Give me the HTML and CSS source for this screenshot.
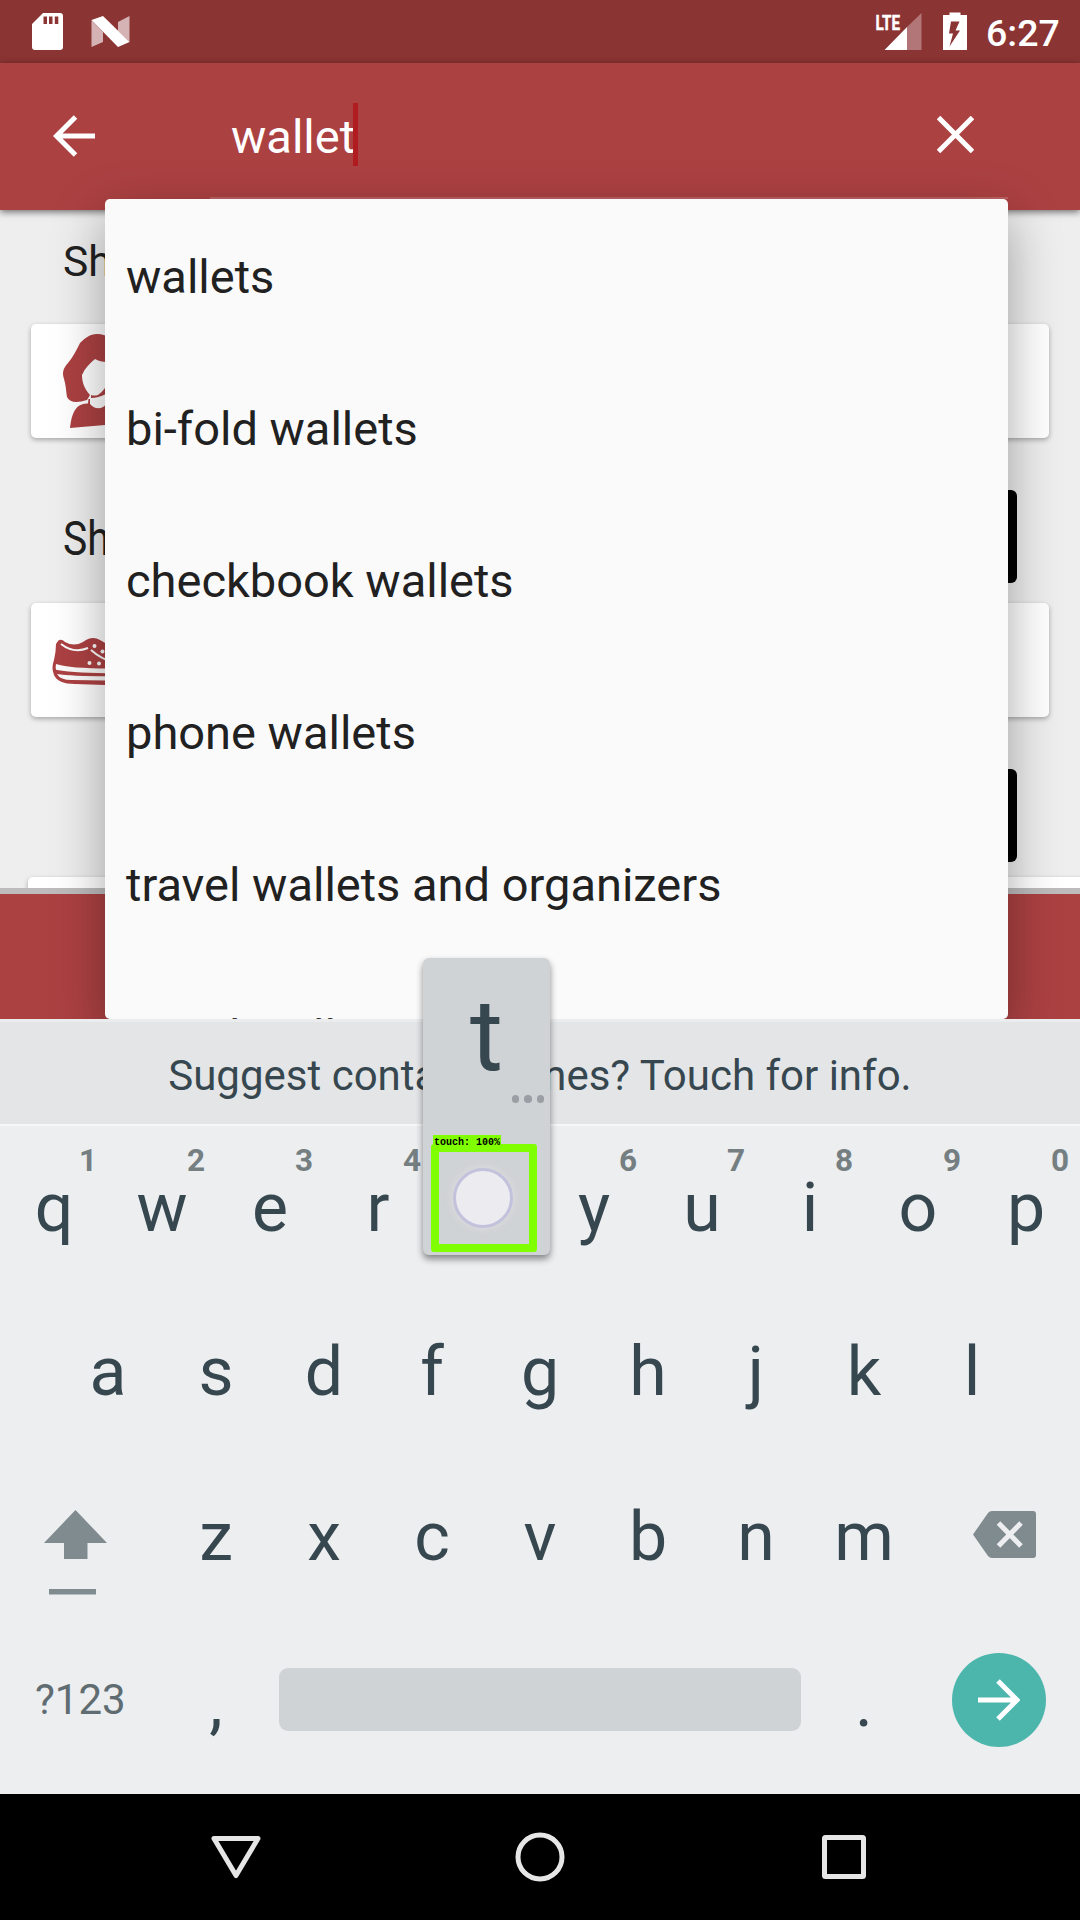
FILE: index.html
```html
<!DOCTYPE html>
<html lang="en">
<head>
<meta charset="utf-8">
<title>Search</title>
<link rel="stylesheet" href="styles.css">
</head>
<body>
<div class="screen">
  <div class="app">
    <header class="status">
      <svg class="status-left" viewBox="0 0 140 63" width="140" height="63">
        <path fill="#fff" fill-rule="evenodd" d="M43 13H60Q63 13 63 16V47Q63 50 60 50H35Q32 50 32 47V24ZM43.500 16.500V24H47V16.500ZM49 16.500V24H52.500V16.500ZM54.800 16.500V24H58.300V16.500Z"/>
        <path fill="#d5b3b4" d="M91.500 20 103 32V42L91.500 47ZM118 22 129.500 16V42L118 31Z"/>
        <path fill="#fff" d="M91.500 20 103 16 129.500 42 118 47Z"/>
      </svg>
      <svg class="status-right" viewBox="860 0 110 63" width="110" height="63">
        <text class="lte" x="875.500" y="29.500" textLength="24.500" lengthAdjust="spacingAndGlyphs">LTE</text>
        <path fill="#b27678" d="M907 27 921.500 13V50H907Z"/>
        <path fill="#fff" d="M907 27V50H884.500Z"/>
        <path fill="#fff" fill-rule="evenodd" d="M949.500 12.500H960.500V15H967V50H943V15H949.500ZM951 21.500 949 33.500H953L949.500 46.500 960 30.500H955.500L959.500 21.500Z"/>
      </svg>
      <span class="clock">6:27</span>
    </header>
    <div class="toolbar">
      <svg class="back" viewBox="0 0 42 42" width="42" height="42"><path d="M42 21H4M22.500 2 3.500 21 22.500 40" fill="none" stroke="#fff" stroke-width="5"/></svg>
      <div class="field">
        <span class="query">wallet</span><i class="caret"></i>
        <svg class="clear" viewBox="0 0 37 37" width="37" height="37"><path d="M1.500 1.500 35.500 35.500M35.500 1.500 1.500 35.500" stroke="#fff" stroke-width="5"/></svg>
      </div>
    </div>
    <main class="content">
      <h2 class="heading">Sh</h2>
      <section class="card">
        <svg viewBox="31 324 120 114" width="120" height="114">
          <path fill="#ac4142" d="M97 334C90 334 85 338 80 343C76 351 73 357 68 363C63 369 62 372 64 379C66 386 66 390 67 397C70 403 77 403 87 400L90 395C84 388 82 382 82 375C85 368 90 363 95 359Q100 362 107 362C111 374 109 388 98 395Q94 396 91 395V398Q98 398 106 394L125 398C132 390 128 370 120 355C115 340 108 334 97 334Z"/>
          <path fill="#ac4142" d="M88 403.500Q79 403 75 410C71 417 71 422 70 428L128 423Q126 406 108 402C103 410 95 410 90 404V399H88.500Z"/>
        </svg>
      </section>
      <button class="more" aria-label="More"></button>
      <h2 class="heading narrow"><span>Sh</span></h2>
      <section class="card">
        <svg viewBox="31 602 120 115" width="120" height="115">
          <path fill="#ac4142" d="M58 640Q61 637 65 641Q74 646 83 641Q92 634 100 639L137 660Q142 675 137 684L105 684L75 683Q58 683 54 674Q51 667 54 659Q56 650 56 643Z"/>
          <g fill="none" stroke="#fbfbfb" stroke-width="2"><path d="M61 643Q74 653 88 647M91 649Q101 658 113 661"/></g>
          <path fill="#fbfbfb" d="M56 663Q55 669 57 669Q82 673 137 672V667Q75 669 56 663ZM57 673Q60 679 72 679L137 680V675Q75 676 57 673Z"/>
          <g fill="#fbfbfb"><circle cx="94.500" cy="645" r="2"/><circle cx="102.500" cy="650.500" r="2"/><circle cx="89.500" cy="662" r="2"/><circle cx="99" cy="662.500" r="2"/></g>
        </svg>
      </section>
      <button class="more" aria-label="More"></button>
      <section class="card peek"></section>
    </main>
    <footer class="bottom-bar"></footer>
    <ul class="suggestions">
      <li>wallets</li>
      <li>bi-fold wallets</li>
      <li>checkbook wallets</li>
      <li>phone wallets</li>
      <li>travel wallets and organizers</li>
      <li>travel wallet</li>
    </ul>
  </div>

  <div class="keyboard">
    <div class="strip">Suggest contact names? Touch for info.</div>
    <div class="row first">
      <span class="key">q<sup>1</sup></span><span class="key">w<sup>2</sup></span><span class="key">e<sup>3</sup></span><span class="key">r<sup>4</sup></span><span class="key"></span><span class="key">y<sup>6</sup></span><span class="key">u<sup>7</sup></span><span class="key">i<sup>8</sup></span><span class="key">o<sup>9</sup></span><span class="key">p<sup>0</sup></span>
    </div>
    <div class="row">
      <span class="key">a</span><span class="key">s</span><span class="key">d</span><span class="key">f</span><span class="key">g</span><span class="key">h</span><span class="key">j</span><span class="key">k</span><span class="key">l</span>
    </div>
    <div class="row">
      <svg class="side" viewBox="0 1456 162 165" width="162" height="165"><path fill="#808b8f" d="M75.500 1510 107 1543H87.500V1559H64V1543H44ZM49 1589H96V1594.500H49Z"/></svg>
      <span class="key">z</span><span class="key">x</span><span class="key">c</span><span class="key">v</span><span class="key">b</span><span class="key">n</span><span class="key">m</span>
      <svg class="side" viewBox="918 1456 162 165" width="162" height="165"><path fill="#808b8f" d="M973 1534.500 988 1513Q989.500 1511 992 1511H1033Q1036 1511 1036 1514V1555Q1036 1558 1033 1558H992Q989.500 1558 988 1556Z"/><path d="M998.500 1523 1021 1546M1021 1523 998.500 1546" stroke="#eceef0" stroke-width="5"/></svg>
    </div>
    <div class="row last">
      <span class="symbols">?123</span>
      <span class="key">,</span>
      <span class="space"></span>
      <span class="key">.</span>
      <span class="enter"><svg viewBox="0 0 42 42" width="42" height="42"><path d="M0 21H38M20 2 39 21 20 40" fill="none" stroke="#fff" stroke-width="5"/></svg></span>
    </div>
  </div>

  <nav class="nav">
    <svg viewBox="0 0 54 54" width="54" height="54"><path d="M5 8.500H49L27 45.500Z"/></svg>
    <svg viewBox="0 0 54 54" width="54" height="54"><circle cx="27" cy="27" r="22"/></svg>
    <svg viewBox="0 0 54 54" width="54" height="54"><rect x="7.500" y="7.500" width="39" height="39" rx="1"/></svg>
  </nav>

  <div class="popup">
    <span class="popup-letter">t</span>
    <span class="dots"><i></i><i></i><i></i></span>
    <div class="touch"><span class="touch-label">touch: 100%</span><i class="finger"></i></div>
  </div>
</div>
</body>
</html>
```
FILE: styles.css
```css
* { box-sizing: border-box; }
body { margin: 0; font-family: Roboto, "Liberation Sans", sans-serif; }
.screen { position: relative; width: 1080px; height: 1920px; display: flex; flex-direction: column; overflow: hidden; }

.app { position: relative; height: 1019px; flex: none; background: #eee; display: flex; flex-direction: column; overflow: hidden; }
.status { height: 63px; flex: none; background: #8a3433; display: flex; align-items: center; color: #fff; }
.status svg { display: block; }
.status-right { margin-left: 720px; }
.lte { font: bold 21px Roboto, sans-serif; fill: #fff; stroke: #fff; stroke-width: .5px; }
.clock { margin-left: 16px; font-size: 37.500px; font-weight: 500; line-height: 63px; padding-top: 3px; }

.toolbar { height: 147px; flex: none; background: #ac4142; display: flex; align-items: center; padding: 0 72px 0 53px; box-shadow: 0 2px 7px rgba(0, 0, 0, .55); z-index: 1; }
.back { margin-top: -1px; }
.field { flex: 1; height: 136px; align-self: flex-start; margin-left: 115px; padding: 0 34.500px 0 21px; display: flex; align-items: center; border-bottom: 2px solid #bb6162; }
.query { font-size: 47px; color: #fff; line-height: 56px; padding-top: 13px; }
.caret { width: 5px; height: 63px; background: #b01c1f; margin: 8px 0 0 -2px; }
.clear { margin-left: auto; margin-top: 9px; }

.content { height: 684px; flex: none; display: flex; flex-direction: column; padding: 30px 31px 0; border-bottom: 6px solid #bdbbbb; overflow: hidden; }
.heading { margin: 0; height: 84px; flex: none; padding-left: 32px; font-size: 42.500px; font-weight: 400; line-height: 43px; color: #212121; }
.card { height: 114px; flex: none; background: #fff; border-radius: 5px; box-shadow: 0 2px 5px rgba(0, 0, 0, .3); }
.card svg { display: block; }
.more { width: 140px; height: 93px; flex: none; margin: 52px 32px 0 auto; padding: 0; border: 0; border-radius: 6px; background: #000; }
.narrow { margin-top: -68px; height: 88px; font-size: 48px; line-height: 48px; }
.narrow span { display: inline-block; transform: scaleX(.85); transform-origin: left; }
.peek { margin: 15px -40px 0 -3px; }
.bottom-bar { flex: 1; background: #ac4142; }

.suggestions { position: absolute; left: 105px; top: 199px; width: 903px; height: 820px; margin: 0; padding: 2px 21px 0; overflow: hidden; list-style: none; background: #fafafa; border-radius: 5px; box-shadow: 0 18px 52px rgba(0, 0, 0, .34); z-index: 2; }
.suggestions li { height: 152px; line-height: 152px; font-size: 47px; color: #212121; white-space: nowrap; }

.keyboard { height: 775px; flex: none; background: #eceef0; color: #37474f; }
.strip { height: 107px; border-top: 3px solid #ebecee; border-bottom: 2px solid #f6f7f8; background: #e3e5e7; text-align: center; font-size: 42px; line-height: 107px; }
.row { display: flex; height: 165px; justify-content: center; }
.key { width: 108px; flex: none; text-align: center; font-size: 68px; line-height: 162px; position: relative; }
.first .key { line-height: 164px; }
.first .key sup { position: absolute; left: 34px; top: 0; width: 108px; font-size: 31.500px; line-height: 69px; font-weight: 700; color: #757f82; }
.side { flex: none; }
.last { align-items: center; padding-bottom: 8px; }
.last .key { padding-top: 6px; }
.symbols { width: 162px; padding: 1px 0 0 35px; font-size: 42px; color: #5f6c71; line-height: 60px; }
.space { width: 522px; height: 63px; margin: 0 9px; border-radius: 9px; background: #d0d3d6; }
.enter { width: 94px; height: 94px; margin: 0 34px; border-radius: 50%; background: #4db6ac; display: flex; align-items: center; justify-content: center; }

.nav { flex: 1; background: #000; display: flex; justify-content: center; align-items: center; gap: 250px; }
.nav svg { fill: none; stroke: #e6e6e6; stroke-width: 5; stroke-linejoin: round; }

.popup { position: absolute; left: 423px; top: 958px; width: 127px; height: 297px; border-radius: 6px; background: #d0d3d6; box-shadow: 0 4px 7px rgba(0, 0, 0, .45); z-index: 3; color: #37474f; display: flex; flex-direction: column; align-items: center; }
.popup-letter { font-size: 101px; line-height: 120px; height: 137px; padding-top: 18px; }
.dots { display: flex; gap: 5px; align-self: flex-end; margin-right: 6px; }
.dots i { width: 7.500px; height: 7.500px; border-radius: 50%; background: #9b9fa5; }
.touch { position: absolute; left: 8px; top: 186px; width: 106px; height: 108px; border: 8px solid #80ff00; border-radius: 3px; }
.touch-label { position: absolute; left: -6px; top: -17px; width: 68px; height: 12px; background: #80ff00; color: #000; font: bold 10px/16px "Liberation Mono", monospace; padding-left: 1px; white-space: nowrap; }
.finger { position: absolute; left: 14px; top: 16px; width: 60px; height: 60px; border-radius: 50%; background: #ebebf0; border: 3px solid #c3c2dc; box-shadow: 0 0 8px rgba(225, 225, 225, .8); }
```
